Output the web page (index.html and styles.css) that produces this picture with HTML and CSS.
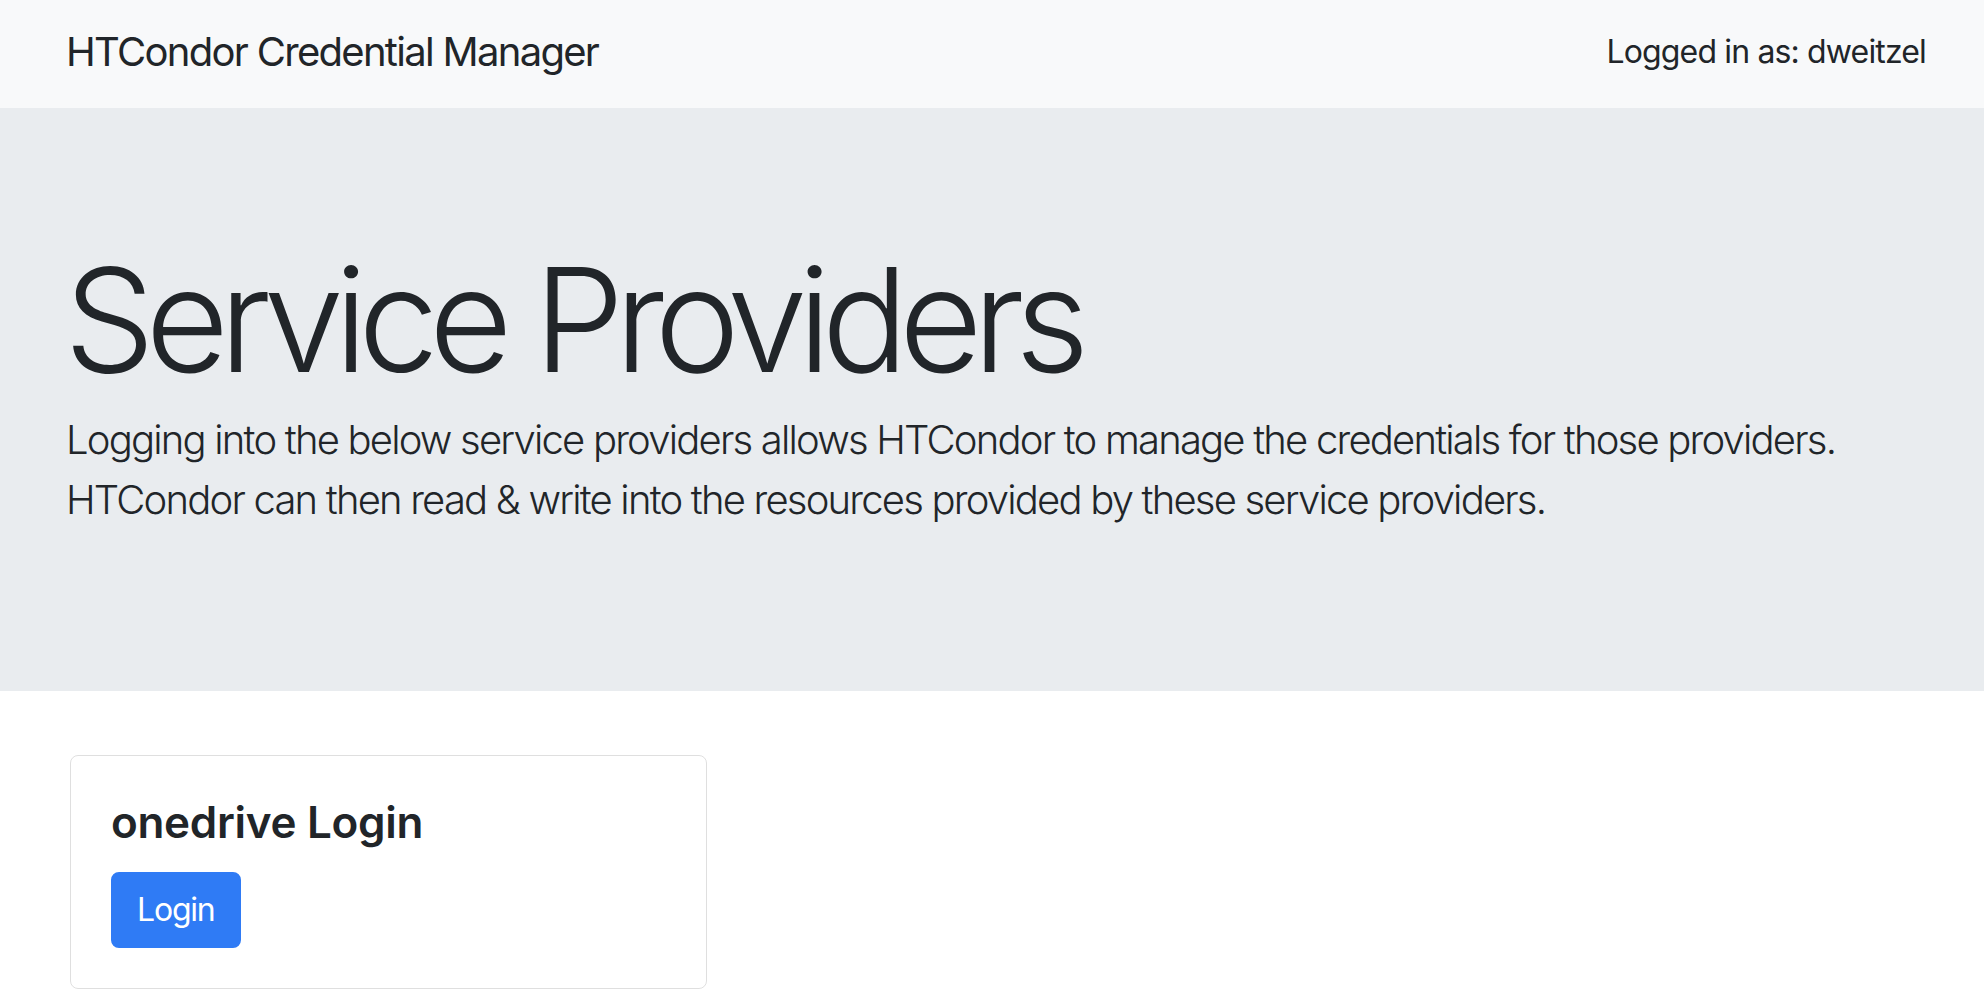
FILE: index.html
```html
<!DOCTYPE html>
<html lang="en">
<head>
<meta charset="utf-8">
<title>HTCondor Credential Manager</title>
<link rel="stylesheet" href="styles.css">
</head>
<body>
<nav class="navbar">
  <span class="brand">HTCondor Credential Manager</span>
  <span class="user">Logged in as: dweitzel</span>
</nav>
<header class="jumbotron">
  <h1 class="display">Service Providers</h1>
  <p class="lead">Logging into the below service providers allows HTCondor to manage the credentials for those providers.<br>HTCondor can then read &amp; write into the resources provided by these service providers.</p>
</header>
<main class="content">
  <div class="card">
    <h5 class="card-title">onedrive Login</h5>
    <a class="btn" href="#">Login</a>
  </div>
</main>
</body>
</html>
```
FILE: styles.css
```css
* { box-sizing: border-box; }
body {
  margin: 0;
  font-family: Inter, "Liberation Sans", sans-serif;
  color: #212529;
  background: #fff;
}
.navbar {
  height: 108px;
  background: #f8f9fa;
  display: flex;
  align-items: center;
  justify-content: space-between;
  padding: 0 58px 5px 66px;
}
.brand {
  font-size: 40px;
  line-height: 60px;
  letter-spacing: -1.7px;
}
.user {
  font-size: 32px;
  line-height: 48px;
  letter-spacing: -0.85px;
}
.jumbotron {
  background: #e9ecef;
  padding: 125px 64px 129px 66px;
  margin-bottom: 64px;
}
.display {
  margin: 0 0 4px -2px;
  font-size: 144px;
  font-weight: 300;
  line-height: 173px;
  letter-spacing: -9.6px;
}
.lead {
  margin: 0 0 32px;
  font-size: 40px;
  font-weight: 300;
  line-height: 60px;
  letter-spacing: -1.8px;
}
.content {
  padding: 0 70px 40px;
}
.card {
  width: 637px;
  border: 1px solid rgba(0,0,0,.125);
  border-radius: 8px;
  padding: 40px;
}
.card-title {
  margin: 0 0 24px;
  font-size: 44px;
  font-weight: 600;
  line-height: 52px;
  letter-spacing: -0.3px;
}
.btn {
  display: inline-block;
  background: #2f7bf5;
  border: 2px solid #2f7bf5;
  color: #fff;
  text-decoration: none;
  font-size: 32px;
  line-height: 48px;
  padding: 12px 24px;
  border-radius: 8px;
  letter-spacing: -1.2px;
}
```
